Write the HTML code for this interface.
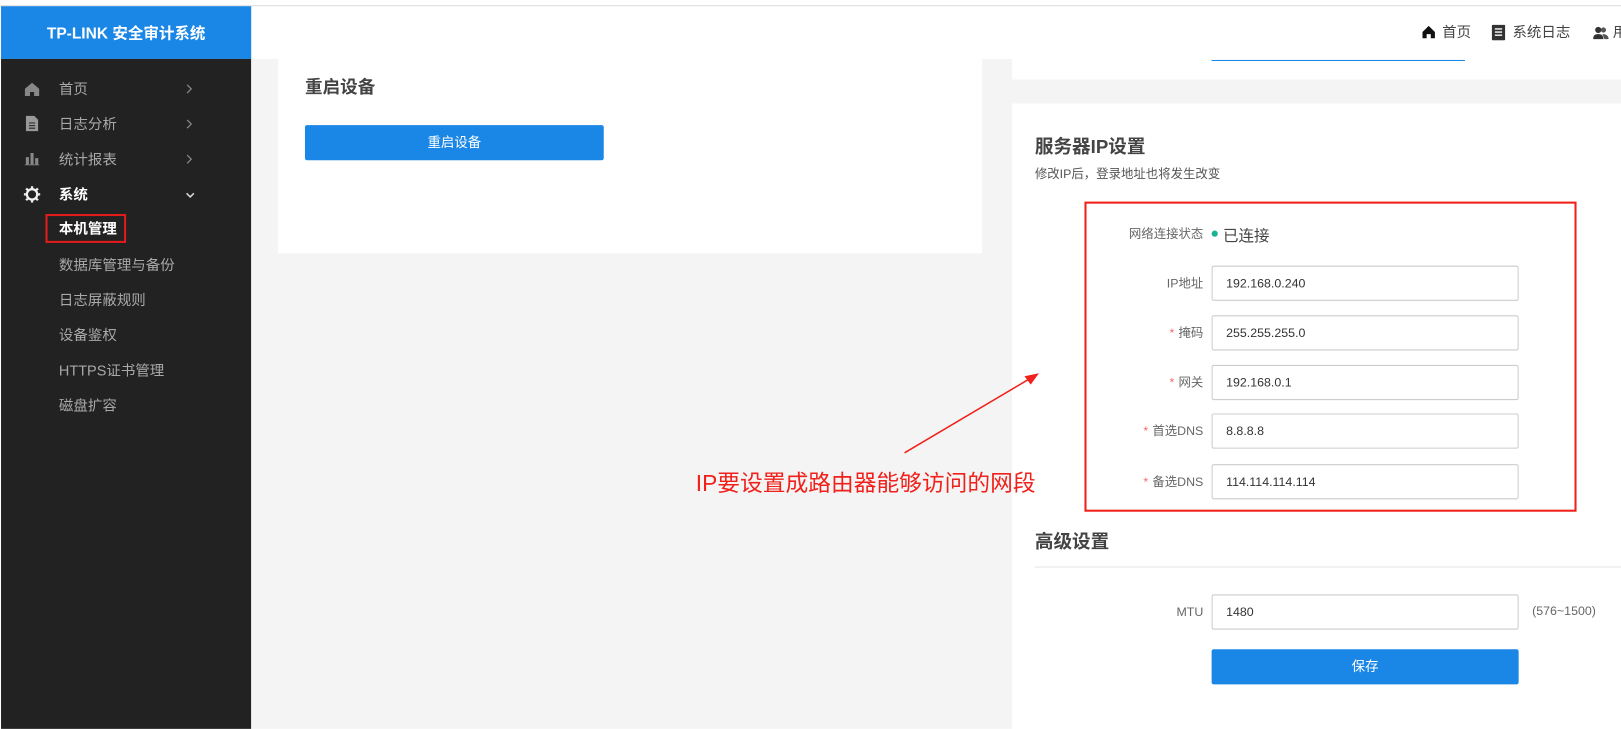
<!DOCTYPE html>
<html><head><meta charset="utf-8"><style>
*{margin:0;padding:0;box-sizing:border-box}
html,body{width:1621px;height:728px;overflow:hidden;background:#fff}
#w{position:absolute;left:0;top:0;width:1568px;height:705px;transform:scale(1.03380);transform-origin:0 0;font-family:"Liberation Sans","Noto Sans CJK SC",sans-serif;color:#333;overflow:hidden}
.a{position:absolute;white-space:nowrap}
.side{left:1px;top:57px;width:242px;height:671px;background:#222}
.logo{left:1px;top:6px;width:242px;height:51px;background:#1a86e6;color:#fff;font-weight:bold;font-size:15px;display:flex;align-items:center;justify-content:center}
.mi{position:absolute;left:57px;font-size:14px;color:#a8a8a8;line-height:20px;white-space:nowrap}
.chev{position:absolute;left:179px}
.lbl{position:absolute;width:180px;left:984px;text-align:right;font-size:12px;color:#666;line-height:34px}
.lbl i{color:#f56c6c;font-style:normal;margin-right:4px}
.inp{position:absolute;left:1172px;width:297px;height:34px;border:1px solid #ccc;border-radius:2px;font-size:12px;color:#333;padding-left:13px;line-height:32px}
.btn{position:absolute;background:#1a86e6;color:#fff;font-size:13px;text-align:center;border-radius:2px}
</style></head><body><div id="w">
<div class="a" style="left:0;top:5px;width:1621px;height:1px;background:#ddd"></div>
<div class="a logo">TP-LINK 安全审计系统</div>
<div class="a side"></div>
<div class="a" style="left:243px;top:57px;width:736px;height:671px;background:#f4f4f4"></div>
<div class="a" style="left:269px;top:57px;width:681px;height:188px;background:#fff"></div>
<div class="a" style="left:295px;top:70px;font-size:17px;font-weight:bold;color:#444">重启设备</div>
<div class="btn" style="left:295px;top:121px;width:289px;height:34px;line-height:34px">重启设备</div>
<div class="a" style="left:979px;top:77px;width:642px;height:23px;background:#f4f4f4"></div>
<div class="a" style="left:1172px;top:58px;width:245px;height:1px;background:#1a86e6"></div>
<svg class="a" style="left:1375px;top:24px" width="14" height="14" viewBox="0 0 14 14"><path d="M7 1L1 7V13H5V9H9V13H13V7Z" fill="#111"/></svg>
<div class="a" style="left:1395px;top:21px;font-size:14px;color:#444">首页</div>
<svg class="a" style="left:1443px;top:24px" width="13" height="15" viewBox="0 0 13 15"><rect width="13" height="15" rx="1" fill="#333"/><path d="M3 4H10M3 7H10M3 10H10" stroke="#fff" stroke-width="1.3"/></svg>
<div class="a" style="left:1463px;top:21px;font-size:14px;color:#444">系统日志</div>
<svg class="a" style="left:1541px;top:25px" width="15" height="13" viewBox="0 0 15 13"><circle cx="5" cy="4" r="3" fill="#333"/><path d="M0 13C0 9 2 8 5 8S10 9 10 13Z" fill="#333"/><circle cx="10" cy="4" r="2.5" fill="#555"/><path d="M9 8C12 8 15 9 15 13H11Z" fill="#555"/></svg>
<div class="a" style="left:1560px;top:21px;font-size:14px;color:#444">用户</div>
<svg class="a" style="left:24px;top:80px" width="14" height="13" viewBox="0 0 14 13"><path d="M7 0L0 6V13H5V9H9V13H14V6Z" fill="#888"/></svg>
<div class="mi" style="top:76px">首页</div>
<svg class="chev" style="top:81px" width="8" height="10"><path d="M2 1L6 5L2 9" fill="none" stroke="#888" stroke-width="1.2"/></svg>
<svg class="a" style="left:25px;top:112px" width="12" height="15" viewBox="0 0 12 15"><path d="M0 0H8L12 4V15H0Z" fill="#999"/><path d="M3 7H9M3 9.5H9M3 12H9" stroke="#222" stroke-width="1"/></svg>
<div class="mi" style="top:110px">日志分析</div>
<svg class="chev" style="top:115px" width="8" height="10"><path d="M2 1L6 5L2 9" fill="none" stroke="#888" stroke-width="1.2"/></svg>
<svg class="a" style="left:24px;top:147px" width="14" height="13" viewBox="0 0 14 13"><path d="M1 5H4V12H1ZM5.5 1H8.5V12H5.5ZM10 6H13V12H10Z" fill="#888"/><path d="M0 12.5H14" stroke="#888"/></svg>
<div class="mi" style="top:144px">统计报表</div>
<svg class="chev" style="top:149px" width="8" height="10"><path d="M2 1L6 5L2 9" fill="none" stroke="#888" stroke-width="1.2"/></svg>
<svg class="a" style="left:23px;top:180px" width="16" height="16" viewBox="0 0 16 16"><circle cx="8" cy="8" r="5" fill="none" stroke="#eee" stroke-width="2.2"/><path d="M8 0V3M8 13V16M0 8H3M13 8H16M2.3 2.3L4.4 4.4M11.6 11.6L13.7 13.7M2.3 13.7L4.4 11.6M11.6 4.4L13.7 2.3" stroke="#eee" stroke-width="2.2"/></svg>
<div class="mi" style="top:178px;color:#fff;font-weight:bold">系统</div>
<svg class="chev" style="top:185px" width="10" height="8"><path d="M1.5 2L5 5.5L8.5 2" fill="none" stroke="#ddd" stroke-width="1.4"/></svg>
<div class="mi" style="top:211px;color:#fff;font-weight:bold">本机管理</div>
<div class="a" style="left:44px;top:207px;width:78px;height:28px;border:2px solid #e21b1b"></div>
<div class="mi" style="top:246px">数据库管理与备份</div>
<div class="mi" style="top:280px">日志屏蔽规则</div>
<div class="mi" style="top:314px">设备鉴权</div>
<div class="mi" style="top:348px">HTTPS证书管理</div>
<div class="mi" style="top:382px">磁盘扩容</div>
<div class="a" style="left:1001px;top:128px;font-size:18px;font-weight:bold;color:#444">服务器IP设置</div>
<div class="a" style="left:1001px;top:159px;font-size:12px;color:#555">修改IP后，登录地址也将发生改变</div>
<div class="a" style="left:1049px;top:195px;width:476px;height:300px;border:2px solid #f0201a"></div>
<div class="lbl" style="top:209px">网络连接状态</div>
<div class="a" style="left:1172px;top:223px;width:6px;height:6px;border-radius:3px;background:#19b394"></div>
<div class="a" style="left:1183px;top:217px;font-size:15px;color:#444">已连接</div>
<div class="lbl" style="top:257px">IP地址</div><div class="inp" style="top:257px">192.168.0.240</div>
<div class="lbl" style="top:305px"><i>*</i>掩码</div><div class="inp" style="top:305px">255.255.255.0</div>
<div class="lbl" style="top:353px"><i>*</i>网关</div><div class="inp" style="top:353px">192.168.0.1</div>
<div class="lbl" style="top:400px"><i>*</i>首选DNS</div><div class="inp" style="top:400px">8.8.8.8</div>
<div class="lbl" style="top:449px"><i>*</i>备选DNS</div><div class="inp" style="top:449px">114.114.114.114</div>
<div class="a" style="left:1001px;top:510px;font-size:18px;font-weight:bold;color:#444">高级设置</div>
<div class="a" style="left:1001px;top:548px;width:620px;height:1px;background:#e4e4e4"></div>
<div class="lbl" style="top:575px">MTU</div><div class="inp" style="top:575px">1480</div>
<div class="a" style="left:1482px;top:584px;font-size:12px;color:#666">(576~1500)</div>
<div class="btn" style="left:1172px;top:628px;width:297px;height:34px;line-height:34px">保存</div>
<svg class="a" style="left:860px;top:350px" width="160" height="100"><path d="M15 88L140 14" stroke="#f0201a" stroke-width="1.5"/><path d="M145 11L131 14L137 22Z" fill="#f0201a"/></svg>
<div class="a" style="left:673px;top:453px;font-size:22px;color:#f0201a;line-height:30px">IP要设置成路由器能够访问的网段</div>
</div></body></html>
